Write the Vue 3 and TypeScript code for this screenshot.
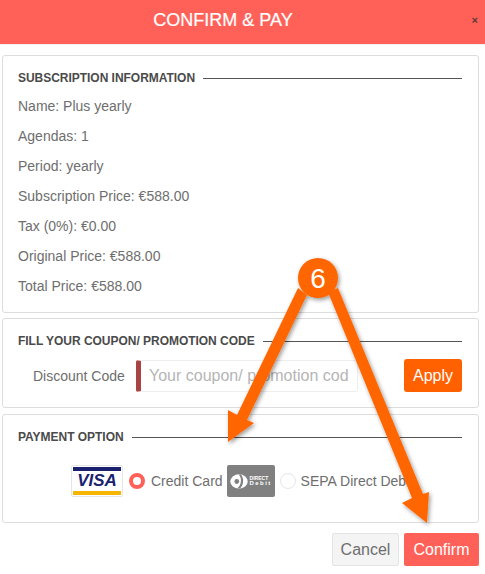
<script setup lang="ts">
const rows: string[] = [
  'Name: Plus yearly',
  'Agendas: 1',
  'Period: yearly',
  'Subscription Price: €588.00',
  'Tax (0%): €0.00',
  'Original Price: €588.00',
  'Total Price: €588.00',
]
</script>

<template>
  <div class="page">
    <header class="head">
      <h1 class="head-title">CONFIRM &amp; PAY</h1>
      <span class="close">×</span>
    </header>

    <main class="content">
      <section class="card card-info">
        <div class="card-title"><span>SUBSCRIPTION INFORMATION</span><i></i></div>
        <div class="rows">
          <p v-for="row in rows" :key="row" class="row">{{ row }}</p>
        </div>
      </section>

      <section class="card card-coupon">
        <div class="card-title"><span>FILL YOUR COUPON/ PROMOTION CODE</span><i></i></div>
        <div class="coupon">
          <label class="coupon-label">Discount Code</label>
          <div class="coupon-input">Your coupon/ promotion cod</div>
          <button class="apply">Apply</button>
        </div>
      </section>

      <section class="card card-pay">
        <div class="card-title"><span>PAYMENT OPTION</span><i></i></div>
        <div class="options">
          <div class="visa">
            <span class="visa-top"></span>
            <span class="visa-word">VISA</span>
            <span class="visa-bottom"></span>
          </div>
          <span class="radio radio-on"></span>
          <span class="opt-text opt-credit">Credit Card</span>
          <div class="dd">
            <svg class="dd-mark" width="18" height="15" viewBox="0 0 18 15">
              <ellipse cx="9" cy="7.5" rx="8.7" ry="7.2" fill="#fff" />
              <path d="M8.5 0.5 C12 3 12 11 7 14.5 L10 14.5 C14 11 14 4 11 0.5 Z" fill="#808080" />
              <circle cx="6.8" cy="7.5" r="2.4" fill="#808080" />
            </svg>
            <span class="dd-text"><b>DIRECT</b><b>Debit</b></span>
          </div>
          <span class="radio radio-off"></span>
          <span class="opt-text">SEPA Direct Debit</span>
        </div>
      </section>

      <footer class="actions">
        <button class="btn btn-cancel">Cancel</button>
        <button class="btn btn-confirm">Confirm</button>
      </footer>
    </main>

    <svg class="overlay" width="485" height="574" viewBox="0 0 485 574">
      <defs>
        <filter id="arrow-shadow" x="-20%" y="-20%" width="140%" height="140%">
          <feDropShadow dx="1.5" dy="2" stdDeviation="2" flood-color="#000" flood-opacity="0.4" />
        </filter>
      </defs>
      <g filter="url(#arrow-shadow)" fill="#ff6600">
        <polygon points="298,288 307,295 247,420 254,423 228,442 228,410 237,415" />
        <polygon points="328,292 338,288 423,494 429,492 427,523 402,503 412,498" />
        <circle cx="318" cy="278" r="20" />
      </g>
      <text x="318" y="288" class="badge-num" text-anchor="middle">6</text>
    </svg>
  </div>
</template>

<style scoped>
.page {
  position: relative;
  width: 485px;
  height: 574px;
  overflow: hidden;
  background: #fff;
  font-family: "Liberation Sans", Arial, sans-serif;
  color: #666;
}
.head {
  height: 45px;
  box-sizing: border-box;
  background: #ff6159;
  border-bottom: 1px solid #f0f0f0;
  display: flex;
  align-items: flex-start;
  justify-content: center;
  padding-left: 1px;
  padding-right: 40px;
  position: relative;
}
.head-title {
  margin: 0;
  font-size: 18px;
  font-weight: 400;
  color: #fff;
  line-height: 40px;
  -webkit-text-stroke: 0.2px #fff;
}
.close {
  position: absolute;
  right: 7px;
  top: 13px;
  font-size: 11px;
  line-height: 14px;
  color: #5a3a3a;
  font-weight: 700;
}
.content {
  padding: 10px 6px 0 2px;
}
.card {
  box-sizing: border-box;
  border: 1px solid #ddd;
  border-radius: 3px;
  padding: 14px 16px 0 15px;
}
.card-info { height: 258px; }
.card-coupon { height: 90px; margin-top: 5px; }
.card-pay { height: 109px; margin-top: 6px; }
.card-title {
  display: flex;
  align-items: center;
  gap: 8px;
  height: 16px;
  font-size: 12px;
  font-weight: 700;
  letter-spacing: -0.03px;
  color: #4a4a4a;
  white-space: nowrap;
}
.card-title i {
  flex: 1;
  height: 1px;
  background: #555;
}
.rows { margin-top: 5px; }
.row {
  margin: 0;
  font-size: 14px;
  line-height: 30px;
  color: #6e6e6e;
}
.coupon {
  display: flex;
  align-items: center;
  margin-top: 10px;
  height: 33px;
}
.coupon-label {
  margin-left: 15px;
  width: 103px;
  font-size: 14px;
  color: #6e6e6e;
}
.coupon-input {
  box-sizing: border-box;
  width: 222px;
  height: 32px;
  border: 1px solid #eee;
  border-left: 5px solid #a94442;
  border-radius: 2px;
  padding-left: 8px;
  font-size: 16px;
  line-height: 30px;
  color: #b5b5b5;
  white-space: nowrap;
  overflow: hidden;
}
.apply {
  margin-left: auto;
  width: 58px;
  height: 33px;
  border: 0;
  border-radius: 3px;
  background: #ff6000;
  color: #fff;
  font: 16px "Liberation Sans", Arial, sans-serif;
  padding: 0;
}
.options {
  display: flex;
  align-items: center;
  margin-top: 20px;
  margin-left: 53px;
  height: 32px;
  white-space: nowrap;
}
.visa {
  box-sizing: border-box;
  width: 52px;
  height: 32px;
  border: 1px solid #e6e6e6;
  border-radius: 2px;
  padding: 1px;
  display: flex;
  flex-direction: column;
  align-items: stretch;
}
.visa-top { height: 4px; background: #1a2270; }
.visa-bottom { height: 4px; background: #f6b500; }
.visa-word {
  flex: 1;
  font-size: 17px;
  font-weight: 700;
  font-style: italic;
  line-height: 20px;
  text-align: center;
  color: #1a2270;
}
.radio {
  box-sizing: border-box;
  width: 16px;
  height: 16px;
  margin-left: 6px;
  border-radius: 50%;
  border: 1px solid #e6e6ee;
  background: #fff;
  flex: none;
}
.radio-on {
  border: 4px solid #ff6159;
}
.radio-off {
  margin-left: 5px;
}
.opt-text {
  margin-left: 5px;
  font-size: 14px;
  color: #6e6e6e;
}
.opt-credit {
  margin-left: 6px;
}
.dd {
  box-sizing: border-box;
  width: 48px;
  height: 32px;
  margin-left: 4px;
  border-radius: 2px;
  background: #808080;
  display: flex;
  align-items: center;
  justify-content: center;
  gap: 2px;
  flex: none;
}
.dd-text {
  display: flex;
  flex-direction: column;
  font-size: 5px;
  line-height: 5px;
  color: #fff;
}
.dd-text b:last-child {
  letter-spacing: 1.4px;
  font-size: 6px;
}
.actions {
  display: flex;
  justify-content: flex-end;
  gap: 5px;
  margin-top: 10px;
}
.btn {
  height: 33px;
  border-radius: 2px;
  font: 16px "Liberation Sans", Arial, sans-serif;
  padding: 0;
}
.btn-cancel {
  width: 67px;
  background: #f4f4f4;
  border: 1px solid #e4e4e4;
  color: #6e6e6e;
}
.btn-confirm {
  width: 75px;
  background: #ff6159;
  border: 0;
  color: #fff;
}
.overlay {
  position: absolute;
  left: 0;
  top: 0;
  pointer-events: none;
}
.badge-num {
  font-family: "Liberation Sans", Arial, sans-serif;
  font-size: 28px;
  fill: #fff;
}
</style>
